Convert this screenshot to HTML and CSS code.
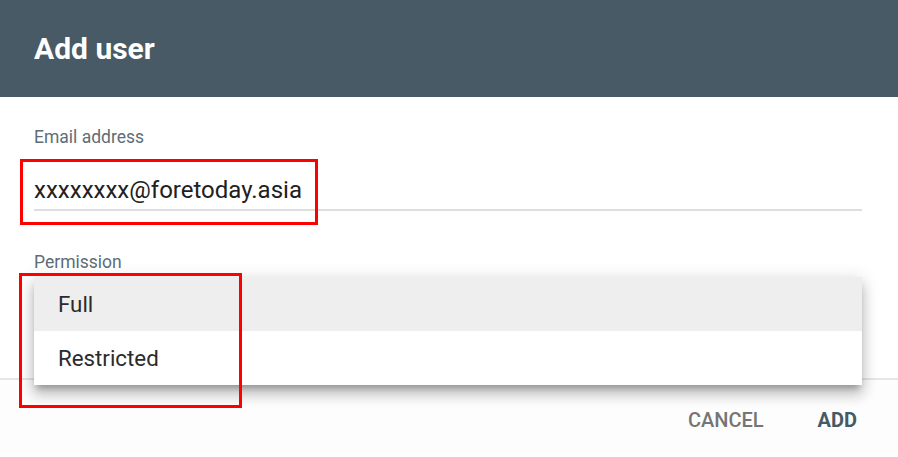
FILE: index.html
```html
<!DOCTYPE html>
<html lang="en">
<head>
<meta charset="utf-8">
<title>Add user</title>
<link rel="stylesheet" href="styles.css">
</head>
<body>
<div class="dialog">
  <header class="header">
    <h1 class="title">Add user</h1>
  </header>
  <div class="content">
    <div class="field field-email">
      <div class="label">Email address</div>
      <div class="value">xxxxxxxx@foretoday.asia</div>
    </div>
    <div class="field field-permission">
      <div class="label">Permission</div>
      <div class="select">
        <ul class="menu">
          <li class="menu-item is-active">Full</li>
          <li class="menu-item">Restricted</li>
        </ul>
      </div>
    </div>
  </div>
  <footer class="footer">
    <button class="btn btn-cancel">Cancel</button>
    <button class="btn btn-add">Add</button>
  </footer>
  <div class="mark mark-email"></div>
  <div class="mark mark-menu"></div>
</div>
</body>
</html>
```
FILE: styles.css
```css
html, body {
  margin: 0;
  padding: 0;
  background: #ffffff;
}
body {
  font-family: Roboto, "Liberation Sans", Arial, sans-serif;
  width: 898px;
  height: 457px;
  overflow: hidden;
}
.dialog {
  position: relative;
  width: 898px;
  height: 457px;
  background: #fdfdfd;
}
.header {
  height: 97px;
  background: #475a65;
  box-sizing: border-box;
  padding: 0 34px;
  display: flex;
  align-items: center;
}
.title {
  margin: 0;
  font-size: 30px;
  line-height: 30px;
  font-weight: 700;
  color: #ffffff;
}
.content {
  background: #ffffff;
  padding: 0 36px 0 34px;
}
.field-email {
  padding-top: 30px;
}
.label {
  font-size: 17.5px;
  line-height: 20px;
  color: #5d6d77;
}
.value {
  margin-top: 28px;
  font-size: 24px;
  line-height: 30px;
  color: #212121;
  padding-bottom: 4px;
  border-bottom: 2px solid #dedede;
}
.field-permission {
  padding-top: 41px;
}
.select {
  position: relative;
  height: 106px;
}
.menu {
  position: absolute;
  left: 0;
  right: 0;
  top: 5px;
  margin: 0;
  padding: 0;
  list-style: none;
  background: #ffffff;
  z-index: 2;
  box-shadow: 0 10px 12px 1px rgba(0,0,0,.16), 0 3px 16px 2px rgba(0,0,0,.12), 0 6px 6px -3px rgba(0,0,0,.24);
}
.menu-item {
  height: 54px;
  line-height: 54px;
  padding: 0 24px;
  font-size: 22.3px;
  color: #2b2b2b;
}
.menu-item.is-active {
  background: #eeeeee;
}
.footer {
  border-top: 2px solid #e6e6e6;
  background: #fdfdfd;
  display: flex;
  justify-content: flex-end;
  gap: 22px;
  padding: 22px 25px 0 0;
}
.btn {
  font-family: inherit;
  font-size: 20px;
  line-height: 36px;
  font-weight: 500;
  text-transform: uppercase;
  background: none;
  border: 0;
  padding: 0 16px;
  margin: 0;
}
.btn-cancel {
  color: #757575;
}
.btn-add {
  color: #455a64;
  font-weight: 700;
}
.mark {
  position: absolute;
  border: 3px solid #ff0000;
  box-sizing: border-box;
  z-index: 3;
}
.mark-email {
  left: 20px;
  top: 159px;
  width: 298px;
  height: 66px;
}
.mark-menu {
  left: 19px;
  top: 273px;
  width: 223px;
  height: 135px;
}
```
